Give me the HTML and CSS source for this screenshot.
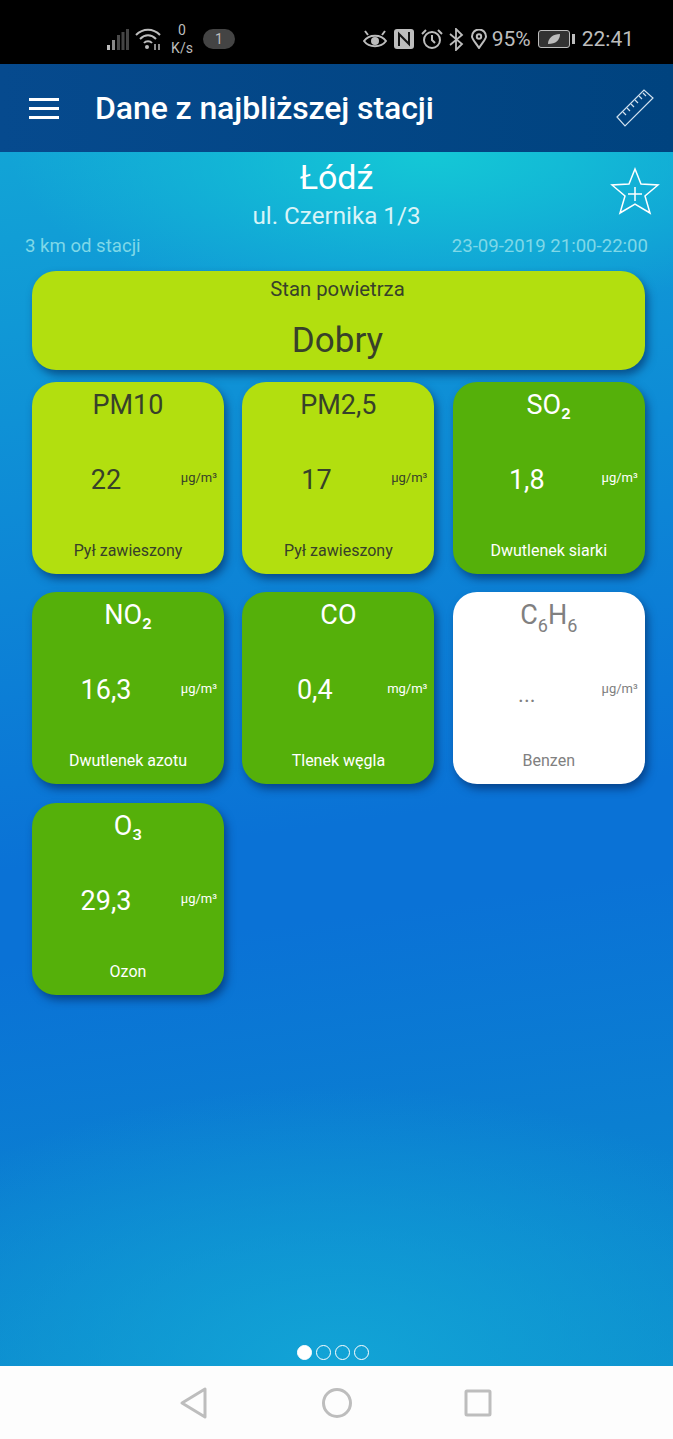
FILE: index.html
```html
<!DOCTYPE html>
<html lang="pl">
<head>
    <meta charset="UTF-8">
    <meta name="viewport" content="width=device-width, initial-scale=1.0">
    <title>Dane z najbliższej stacji</title>
    <link rel="stylesheet" href="styles.css">
</head>
<body>

<div class="phone">
    <!-- Status bar -->
    <div class="status-bar">
        <div class="status-left">
            <svg class="ic-signal" width="24" height="24" viewBox="0 0 24 24">
                <rect x="1" y="18" width="3" height="5" fill="#bdbdbd"/>
                <rect x="6" y="13" width="3" height="10" fill="#8a8a8a"/>
                <rect x="11" y="8" width="3" height="15" fill="#4a4a4a"/>
                <rect x="15.500" y="5" width="3" height="18" fill="#444"/>
                <rect x="20" y="2" width="3" height="21" fill="#444"/>
            </svg>
            <svg class="ic-wifi" width="28" height="24" viewBox="0 0 28 24" fill="none" stroke="#bdbdbd" stroke-width="2">
                <path d="M2 8C9 1 19 1 26 8"/>
                <path d="M6 12C11 7 17 7 22 12"/>
                <path d="M10 16C12 13.500 16 13.500 18 16"/>
                <circle cx="13" cy="20" r="2" fill="#bdbdbd" stroke="none"/>
                <path d="M21 17v6M25 17v6" stroke-width="1.500"/>
            </svg>
            <div class="speed"><span>0</span><span>K/s</span></div>
            <div class="pill">1</div>
        </div>
        <div class="status-right">
            <svg class="ic-eye" width="24" height="20" viewBox="0 0 24 20" fill="none" stroke="#bdbdbd" stroke-width="2">
                <path d="M1 12C6 5 18 5 23 12C18 19 6 19 1 12Z"/>
                <circle cx="12" cy="12" r="4" fill="#bdbdbd" stroke="none"/>
                <path d="M2 2l3 4M22 2l-3 4"/>
            </svg>
            <svg class="ic-nfc" width="20" height="20" viewBox="0 0 20 20">
                <rect width="20" height="20" rx="3" fill="#bdbdbd"/>
                <path d="M5 17V5l10 10V3" fill="none" stroke="#111" stroke-width="2"/>
            </svg>
            <svg class="ic-alarm" width="22" height="20" viewBox="0 0 22 20" fill="none" stroke="#bdbdbd" stroke-width="2">
                <circle cx="11" cy="11" r="8"/>
                <path d="M11 6v5l3 3M1 5l4-4M21 5l-4-4"/>
            </svg>
            <svg class="ic-bt" width="15" height="23" viewBox="0 0 15 23" fill="none" stroke="#bdbdbd" stroke-width="1.800">
                <path d="M1 6l12 10-6 6V1l6 6L1 17"/>
            </svg>
            <svg class="ic-pin" width="16" height="20" viewBox="0 0 16 20" fill="none" stroke="#bdbdbd" stroke-width="2">
                <path d="M8 19C4 13 1 10 1 7.500a7 7 0 0 1 14 0C15 10 12 13 8 19Z"/>
                <circle cx="8" cy="7.500" r="2.200"/>
            </svg>
            <span class="battery-text">95%</span>
            <div class="battery">
                <div class="battery-body">
                    <svg width="14" height="12" viewBox="0 0 14 12"><path d="M1 11C1 5 6 1 13 1C13 7 9 11 1 11Z" fill="#bdbdbd"/></svg>
                </div>
                <div class="battery-tip"></div>
            </div>
            <span class="clock">22:41</span>
        </div>
    </div>

    <!-- App bar -->
    <div class="app-bar">
        <div class="menu-icon"><span></span><span></span><span></span></div>
        <h1>Dane z najbliższej stacji</h1>
        <svg class="ruler" width="40" height="40" viewBox="0 0 40 40" fill="none" stroke="#cfe0ee" stroke-width="1.200">
            <path d="M2 29L29 2L38 10L10 38Z"/>
            <path d="M8 24l3 3M12 20l3 3M16 16l3 3M20 12l3 3M24 8l3 3M28 5l3 3"/>
        </svg>
    </div>

    <!-- Main -->
    <div class="main">
        <div class="station">
            <div class="city">Łódź</div>
            <div class="street">ul. Czernika 1/3</div>
            <svg class="star" width="50" height="48" viewBox="0 0 50 48" fill="none" stroke="#fff" stroke-width="1.500">
                <path d="M25 2L31 17L48 18L35 29L40 46L25 37L10 46L15 29L2 18L19 17Z"/>
                <path d="M25 20V34M18 27H32"/>
            </svg>
        </div>
        <div class="meta">
            <span>3 km od stacji</span>
            <span>23-09-2019 21:00-22:00</span>
        </div>

        <div class="air-state">
            <div class="air-label">Stan powietrza</div>
            <div class="air-value">Dobry</div>
        </div>

        <div class="grid">
            <div class="card lime">
                <div class="card-name">PM10</div>
                <div class="card-mid"><span class="card-value">22</span><span class="card-unit">µg/m³</span></div>
                <div class="card-desc">Pył zawieszony</div>
            </div>
            <div class="card lime">
                <div class="card-name">PM2,5</div>
                <div class="card-mid"><span class="card-value">17</span><span class="card-unit">µg/m³</span></div>
                <div class="card-desc">Pył zawieszony</div>
            </div>
            <div class="card green">
                <div class="card-name">SO₂</div>
                <div class="card-mid"><span class="card-value">1,8</span><span class="card-unit">µg/m³</span></div>
                <div class="card-desc">Dwutlenek siarki</div>
            </div>
            <div class="card green">
                <div class="card-name">NO₂</div>
                <div class="card-mid"><span class="card-value">16,3</span><span class="card-unit">µg/m³</span></div>
                <div class="card-desc">Dwutlenek azotu</div>
            </div>
            <div class="card green">
                <div class="card-name">CO</div>
                <div class="card-mid"><span class="card-value">0,4</span><span class="card-unit">mg/m³</span></div>
                <div class="card-desc">Tlenek węgla</div>
            </div>
            <div class="card blank">
                <div class="card-name">C<sub>6</sub>H<sub>6</sub></div>
                <div class="card-mid"><span class="card-value">...</span><span class="card-unit">µg/m³</span></div>
                <div class="card-desc">Benzen</div>
            </div>
            <div class="card green">
                <div class="card-name">O₃</div>
                <div class="card-mid"><span class="card-value">29,3</span><span class="card-unit">µg/m³</span></div>
                <div class="card-desc">Ozon</div>
            </div>
        </div>

        <div class="dots">
            <span class="dot active"></span>
            <span class="dot"></span>
            <span class="dot"></span>
            <span class="dot"></span>
        </div>
    </div>

    <!-- Nav bar -->
    <div class="nav-bar">
        <svg width="30" height="34" viewBox="0 0 30 34" fill="none" stroke="#bdbdbd" stroke-width="3" stroke-linejoin="round">
            <path d="M26 3V31L3 17Z"/>
        </svg>
        <svg width="30" height="30" viewBox="0 0 30 30" fill="none" stroke="#bdbdbd" stroke-width="3">
            <circle cx="15" cy="15" r="13.500"/>
        </svg>
        <svg width="28" height="28" viewBox="0 0 28 28" fill="none" stroke="#bdbdbd" stroke-width="3" stroke-linejoin="round">
            <rect x="2" y="2" width="24" height="24" rx="1"/>
        </svg>
    </div>
</div>

</body>
</html>
```

FILE: styles.css
```css
* {
    box-sizing: border-box;
}
body {
    margin: 0;
    font-family: Roboto, "Liberation Sans", sans-serif;
}
.phone {
    width: 673px;
    height: 1439px;
    display: flex;
    flex-direction: column;
    overflow: hidden;
}

/* status bar */
.status-bar {
    height: 64px;
    background-color: #000;
    color: #bdbdbd;
    display: flex;
    justify-content: space-between;
    align-items: center;
    padding: 14px 39px 0 106px;
}
.status-left,
.status-right {
    display: flex;
    align-items: center;
}
.ic-wifi {
    margin-left: 4px;
}
.speed {
    display: flex;
    flex-direction: column;
    align-items: center;
    font-size: 14px;
    line-height: 18px;
    margin-left: 8px;
    width: 24px;
}
.pill {
    width: 32px;
    height: 20px;
    margin-left: 9px;
    border-radius: 10px;
    background-color: #444;
    font-size: 14px;
    line-height: 20px;
    text-align: center;
}
.status-right {
    gap: 7px;
}
.ic-bt {
    margin-left: -1px;
}
.battery-text {
    margin-left: -2px;
}
.battery-text,
.clock {
    font-size: 21px;
}
.battery {
    display: flex;
    align-items: center;
}
.battery-body {
    width: 32px;
    height: 18px;
    border: 1px solid #bdbdbd;
    border-radius: 3px;
    background-color: #333;
    display: flex;
    align-items: center;
    justify-content: center;
}
.battery-tip {
    width: 3px;
    height: 10px;
    margin-left: 2px;
    background-color: #bdbdbd;
}

/* app bar */
.app-bar {
    height: 88px;
    background: linear-gradient(90deg, #064a8e, #00437f);
    color: #fff;
    display: flex;
    align-items: center;
    padding: 0 18px 0 29px;
}
.menu-icon {
    width: 30px;
    display: flex;
    flex-direction: column;
    gap: 6px;
}
.menu-icon span {
    height: 3px;
    background-color: #fff;
}
.app-bar h1 {
    flex: 1;
    margin: 0 0 0 36px;
    font-size: 32px;
    font-weight: 500;
    letter-spacing: -0.1px;
}

/* main area */
.main {
    flex: 1;
    position: relative;
    padding: 0 28px 0 32px;
    background:
        radial-gradient(ellipse 420px 170px at 430px 0, #14c8d6, rgba(20, 200, 214, 0)),
        radial-gradient(ellipse 520px 280px at 50% 100%, #12a4d6, rgba(18, 164, 214, 0)),
        linear-gradient(172deg, #12a4d6 0%, #0a72d6 55%, #0a72d6 62%, #0c8ccc 100%);
}
.station {
    position: relative;
    margin-right: 4px;
    text-align: center;
    color: #fff;
    height: 78px;
}
.city {
    font-size: 34px;
    line-height: 40px;
    padding-top: 5px;
    height: 45px;
}
.street {
    font-size: 24.200px;
    line-height: 30px;
    padding-top: 4px;
    color: #d8f4f8;
}
.star {
    position: absolute;
    top: 15px;
    right: -19px;
}
.meta {
    display: flex;
    justify-content: space-between;
    margin: 4px -3px 0 -7px;
    font-size: 18.600px;
    line-height: 24px;
    color: #7fd8e8;
}
.air-state {
    margin-top: 13px;
    height: 99px;
    border-radius: 24px;
    background-color: #b2df0f;
    box-shadow: 3px 5px 8px rgba(0, 30, 80, 0.55);
    color: #37412a;
    text-align: center;
}
.air-label {
    font-size: 20.300px;
    line-height: 24px;
    padding-top: 6px;
    padding-right: 2px;
}
.air-value {
    font-size: 35px;
    line-height: 40px;
    padding-top: 20px;
    padding-right: 2px;
}
.grid {
    display: grid;
    grid-template-columns: repeat(3, 192px);
    grid-auto-rows: 192px;
    column-gap: 18.400px;
    row-gap: 18.500px;
    margin-top: 11.800px;
}
.card {
    border-radius: 24px;
    box-shadow: 3px 5px 8px rgba(0, 30, 80, 0.55);
    display: flex;
    flex-direction: column;
    text-align: center;
    padding: 7px 7px 0 0;
}
.lime {
    background-color: #b2df0f;
    color: #37412a;
}
.green {
    background-color: #55b00a;
    color: #fff;
}
.blank {
    background-color: #fff;
    color: #808080;
}
.card-name {
    font-size: 27px;
    line-height: 32px;
    height: 32px;
    padding-left: 7px;
}
.card-name sub {
    font-size: 18px;
    line-height: 0;
    vertical-align: -8px;
}
.card-mid {
    display: flex;
    align-items: center;
    margin-top: 39px;
    height: 40px;
}
.card-value {
    width: 148px;
    font-size: 27px;
    text-align: center;
}
.blank .card-value {
    font-size: 22px;
    padding-top: 8px;
}
.card-unit {
    flex: 1;
    text-align: right;
    font-size: 13px;
    padding-bottom: 4px;
}
.card-desc {
    margin-top: 41px;
    padding-left: 7px;
    font-size: 16px;
    line-height: 20px;
}

/* pager */
.dots {
    position: absolute;
    left: 297px;
    bottom: 6px;
    display: flex;
    gap: 4px;
}
.dot {
    width: 15px;
    height: 15px;
    border-radius: 50%;
    border: 1.500px solid #fff;
}
.dot.active {
    background-color: #fff;
}

/* nav bar */
.nav-bar {
    height: 73px;
    background-color: #fdfdfd;
    display: flex;
    align-items: center;
    padding: 0 181px 0 179px;
    justify-content: space-between;
}
```
